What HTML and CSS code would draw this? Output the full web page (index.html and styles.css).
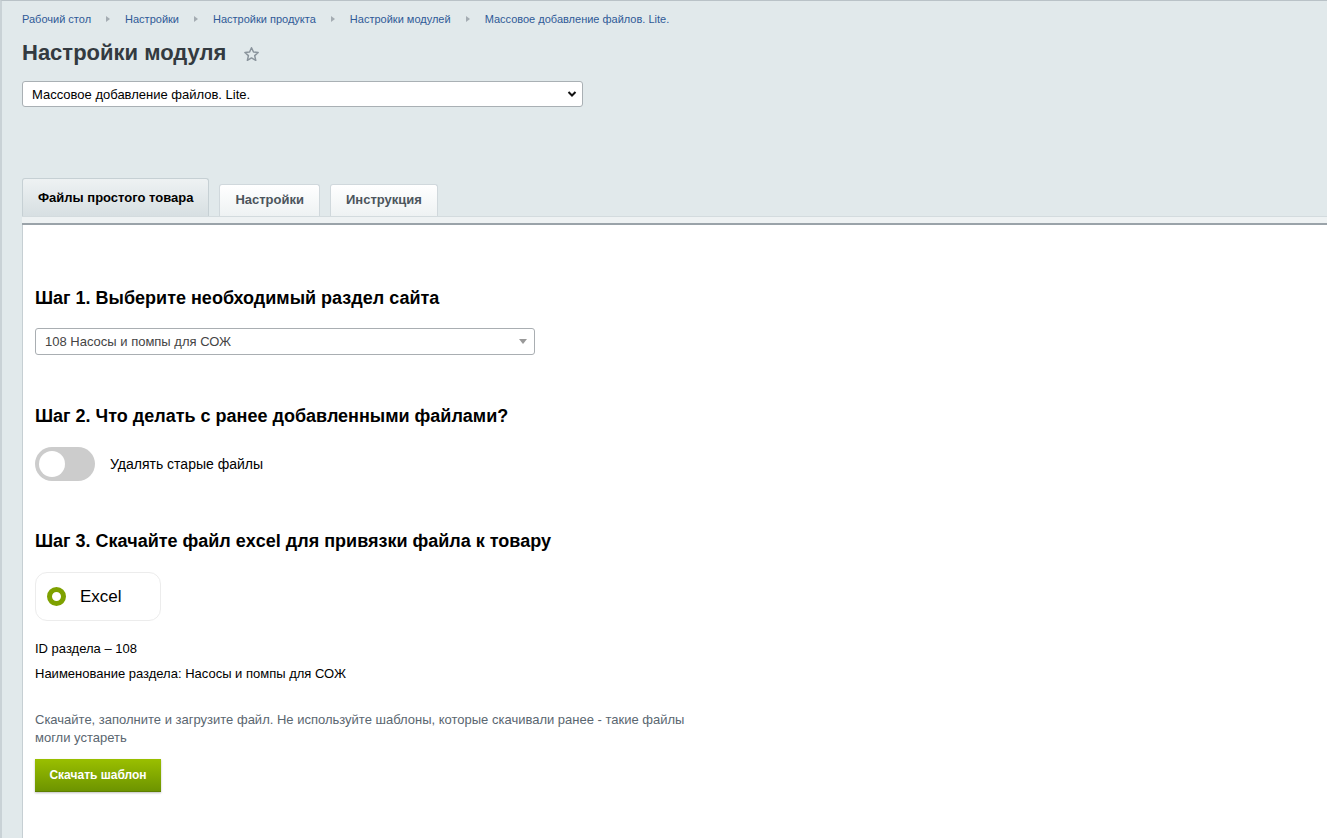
FILE: index.html
```html
<!DOCTYPE html>
<html lang="ru">
<head>
<meta charset="utf-8">
<link rel="stylesheet" href="styles.css">
<title>Настройки модуля</title>
</head>
<body>
<div class="page">
  <div class="crumbs">
    <a>Рабочий стол</a><span class="sep"></span>
    <a>Настройки</a><span class="sep"></span>
    <a>Настройки продукта</a><span class="sep"></span>
    <a>Настройки модулей</a><span class="sep"></span>
    <a>Массовое добавление файлов. Lite.</a>
  </div>
  <div class="title-row">
    <h1 class="title">Настройки модуля</h1>
    <svg class="star" width="17" height="17" viewBox="0 0 16 16"><path d="M8 1.6l1.9 4.1 4.4.4-3.3 3 1 4.4L8 11.2l-3.9 2.3 1-4.4-3.3-3 4.4-.4z" fill="none" stroke="#8a949c" stroke-width="1.4" stroke-linejoin="round"/></svg>
  </div>
  <div class="mod-select">
    <span>Массовое добавление файлов. Lite.</span>
    <svg width="10" height="8" viewBox="0 0 10 8"><path d="M1.5 2l3.5 3.5L8.5 2" fill="none" stroke="#111" stroke-width="2"/></svg>
  </div>

  <div class="tabs">
    <div class="tab active">Файлы простого товара</div>
    <div class="tab">Настройки</div>
    <div class="tab">Инструкция</div>
  </div>
  <div class="tabline"></div>
  <div class="panel">
    <h2 class="step">Шаг 1. Выберите необходимый раздел сайта</h2>
    <div class="sec-select">
      <span>108 Насосы и помпы для СОЖ</span>
      <span class="tri"></span>
    </div>

    <h2 class="step step2">Шаг 2. Что делать с ранее добавленными файлами?</h2>
    <div class="toggle-row">
      <span class="toggle"><span class="knob"></span></span>
      <span class="toggle-label">Удалять старые файлы</span>
    </div>

    <h2 class="step step3">Шаг 3. Скачайте файл excel для привязки файла к товару</h2>
    <div class="card">
      <span class="radio"></span>
      <span class="card-label">Excel</span>
    </div>
    <p class="info first">ID раздела – 108</p>
    <p class="info">Наименование раздела: Насосы и помпы для СОЖ</p>
    <p class="hint">Скачайте, заполните и загрузите файл. Не используйте шаблоны, которые скачивали ранее - такие файлы могли устареть</p>
    <div class="btn">Скачать шаблон</div>
  </div>
</div>
</body>
</html>
```

FILE: styles.css
```css
html, body {
  margin: 0;
  padding: 0;
  height: 100%;
}
body {
  background: #e1e9eb;
  font-family: "Liberation Sans", Arial, sans-serif;
  color: #000;
  overflow: hidden;
}
.page {
  min-height: 100%;
  box-sizing: border-box;
  border-top: 1px solid #b9c2c7;
  border-left: 2px solid #c9d2d6;
  padding-left: 20px;
  display: flex;
  flex-direction: column;
}
.crumbs {
  display: flex;
  align-items: center;
  padding-top: 10px;
  height: 15px;
  font-size: 11px;
  color: #2f5a97;
}
.crumbs a {
  color: #2f5a97;
}
.sep {
  width: 0;
  height: 0;
  border-left: 4px solid #a4acb2;
  border-top: 3px solid transparent;
  border-bottom: 3px solid transparent;
  margin: 0 15px 0 15px;
}
.title-row {
  display: flex;
  align-items: center;
  margin-top: 14px;
  height: 26px;
}
.title {
  margin: 0;
  font-size: 22px;
  font-weight: bold;
  color: #333a40;
}
.star {
  margin-left: 17px;
  margin-top: 2px;
}
.mod-select {
  margin-top: 15px;
  width: 561px;
  height: 26px;
  box-sizing: border-box;
  background: #fff;
  border: 1px solid #a9b0b4;
  border-radius: 3px;
  display: flex;
  align-items: center;
  justify-content: space-between;
  padding: 0 5px 0 9px;
  font-size: 13px;
  color: #000;
}
.tabs {
  display: flex;
  align-items: flex-end;
  margin-top: 71px;
  height: 38px;
}
.tab {
  height: 32px;
  box-sizing: border-box;
  padding: 0 15px 3px;
  margin-right: 10px;
  border: 1px solid #d0d8dc;
  border-bottom: none;
  border-radius: 3px 3px 0 0;
  background: linear-gradient(#ffffff, #eef2f3);
  font-size: 13px;
  font-weight: bold;
  color: #4c555c;
  display: flex;
  align-items: center;
}
.tab.active {
  height: 38px;
  border-color: #c6d0d4;
  background: linear-gradient(#eef2f3, #d7dfe2);
  color: #000;
  padding: 0 15px 1px;
}
.tabline {
  height: 6px;
  background: #eef2f3;
  border-top: 1px solid #d3dbde;
  border-bottom: 2px solid #9aa3a9;
}
.panel {
  flex: 1;
  background: #fff;
  border-left: 1px solid #c6cfd3;
  padding: 62px 0 40px 12px;
}
.step {
  margin: 0;
  font-size: 18px;
  font-weight: bold;
  color: #000;
  line-height: 22px;
}
.step2 { margin-top: 50px; }
.step3 { margin-top: 49px; }
.sec-select {
  margin-top: 19px;
  width: 500px;
  height: 27px;
  border: 1px solid #a9aeb2;
  border-radius: 3px;
  box-sizing: border-box;
  display: flex;
  align-items: center;
  justify-content: space-between;
  padding: 0 0 0 9px;
  font-size: 13px;
  color: #444;
}
.tri {
  width: 0;
  height: 0;
  border-top: 5px solid #999;
  border-left: 4px solid transparent;
  border-right: 4px solid transparent;
  margin-right: 7px;
}
.toggle-row {
  display: flex;
  align-items: center;
  margin-top: 20px;
}
.toggle {
  width: 60px;
  height: 34px;
  border-radius: 17px;
  background: #cccccc;
  display: flex;
  align-items: center;
  padding-left: 4px;
  box-sizing: border-box;
}
.knob {
  width: 26px;
  height: 26px;
  border-radius: 50%;
  background: #fff;
}
.toggle-label {
  margin-left: 15px;
  font-size: 14px;
  color: #000;
}
.card {
  margin-top: 20px;
  width: 126px;
  height: 49px;
  border: 1px solid #ececec;
  border-radius: 12px;
  display: flex;
  align-items: center;
  padding-left: 11px;
  box-sizing: border-box;
}
.radio {
  width: 19px;
  height: 19px;
  border-radius: 50%;
  box-sizing: border-box;
  border: 5px solid #7ea100;
  background: #fff;
}
.card-label {
  margin-left: 14px;
  font-size: 17px;
  color: #000;
}
.info {
  margin: 0;
  font-size: 13px;
  line-height: 25px;
  color: #000;
}
.info.first { margin-top: 15px; }
.hint {
  margin: 25px 0 0 0;
  width: 660px;
  font-size: 13px;
  line-height: 18px;
  color: #5a6670;
}
.btn {
  margin-top: 12px;
  width: 126px;
  height: 33px;
  background: linear-gradient(#9abf00, #6d9400);
  border-bottom: 1px solid #5d7f00;
  box-sizing: border-box;
  box-shadow: 0 1px 2px rgba(0,0,0,0.25);
  color: #fff;
  font-size: 12px;
  font-weight: bold;
  display: flex;
  align-items: center;
  justify-content: center;
}
```
